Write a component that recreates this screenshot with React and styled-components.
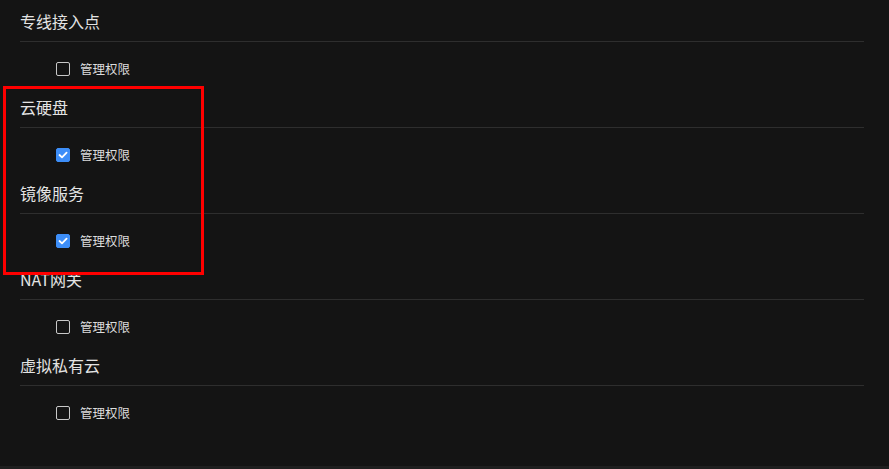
import React, { useState } from "react";
import styled, { createGlobalStyle } from "styled-components";

const GlobalStyle = createGlobalStyle`
  html, body {
    margin: 0;
    padding: 0;
    background: #141414;
  }
  body {
    font-family: "Noto Sans CJK SC", "Noto Sans", sans-serif;
  }
`;

const Page = styled.div`
  position: relative;
  height: 469px;
  background: #141414;
  display: flex;
  flex-direction: column;
  overflow: hidden;
`;

const List = styled.div`
  flex: 1;
  padding: 0 25px 0 20px;
`;

const Section = styled.div`
  display: flex;
  flex-direction: column;
`;

const Title = styled.div`
  height: 41px;
  line-height: 42px;
  font-size: 16px;
  color: #e3e3e3;
  border-bottom: 1px solid #2e2e2e;
`;

const Option = styled.label`
  display: flex;
  align-items: center;
  gap: 10px;
  height: 14px;
  padding: 20px 0 10px 36px;
  cursor: pointer;
`;

const Box = styled.span`
  width: 14px;
  height: 14px;
  box-sizing: border-box;
  border-radius: 2px;
  border: 1px solid ${p => (p.$on ? "#3d8ef8" : "#c8c8c8")};
  background: ${p => (p.$on ? "#3d8ef8" : "transparent")};
  display: flex;
  align-items: center;
  justify-content: center;
`;

const Label = styled.span`
  font-size: 12.5px;
  line-height: 14px;
  color: #dcdcdc;
`;

const Footer = styled.div`
  height: 3px;
  background: #1f1f1f;
`;

const Highlight = styled.div`
  position: absolute;
  left: 3px;
  top: 86px;
  width: 195px;
  height: 183px;
  border: 3px solid #ff0000;
  pointer-events: none;
`;

const Check = () => (
  <svg width="10" height="8" viewBox="0 0 10 8">
    <path d="M1.5 4 L4 6.3 L8.6 1.6" fill="none" stroke="#fff" strokeWidth="1.8" strokeLinecap="round" strokeLinejoin="round" />
  </svg>
);

const initial = [
  { name: "专线接入点", on: false },
  { name: "云硬盘", on: true },
  { name: "镜像服务", on: true },
  { name: "NAT网关", on: false },
  { name: "虚拟私有云", on: false },
];

const App = () => {
  const [items, setItems] = useState(initial);

  const toggle = i =>
    setItems(items.map((it, idx) => (idx === i ? { ...it, on: !it.on } : it)));

  return (
    <Page>
      <GlobalStyle />
      <List>
        {items.map((it, i) => (
          <Section key={it.name}>
            <Title>{it.name}</Title>
            <Option onClick={() => toggle(i)}>
              <Box $on={it.on}>{it.on && <Check />}</Box>
              <Label>管理权限</Label>
            </Option>
          </Section>
        ))}
      </List>
      <Footer />
      <Highlight />
    </Page>
  );
};

export default App;
